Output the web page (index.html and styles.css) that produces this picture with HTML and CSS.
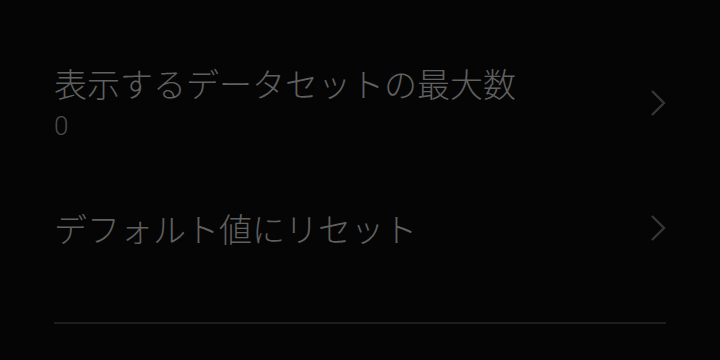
FILE: index.html
```html
<!DOCTYPE html>
<html lang="ja">
<head>
<meta charset="utf-8">
<link rel="stylesheet" href="styles.css">
</head>
<body>
<div class="list">
  <div class="row">
    <div class="text">
      <div class="title">表示するデータセットの最大数</div>
      <div class="summary">0</div>
    </div>
    <svg class="chev" width="16" height="28" viewBox="0 0 16 28"><path d="M2 2 L14 14 L2 26" fill="none" stroke="#363636" stroke-width="2.4"/></svg>
  </div>
  <div class="row">
    <div class="text">
      <div class="title">デフォルト値にリセット</div>
    </div>
    <svg class="chev" width="16" height="28" viewBox="0 0 16 28"><path d="M2 2 L14 14 L2 26" fill="none" stroke="#363636" stroke-width="2.4"/></svg>
  </div>
  <div class="divider"></div>
</div>
</body>
</html>
```
FILE: styles.css
```css
html, body {
  margin: 0;
  padding: 0;
  background: #050505;
  width: 720px;
  height: 360px;
  overflow: hidden;
}
.list {
  padding: 40px 54px 0 54px;
  font-family: "Noto Sans CJK JP", "Noto Sans", sans-serif;
}
.row {
  height: 125px;
  display: flex;
  align-items: center;
  justify-content: space-between;
}
.text {
  display: flex;
  flex-direction: column;
}
.title {
  font-size: 33px;
  font-weight: 300;
  line-height: 40px;
  color: #606060;
}
.summary {
  margin-top: 6px;
  font-size: 26px;
  line-height: 34px;
  color: #4a4a4a;
  font-family: Roboto, "Noto Sans", sans-serif;
  font-weight: 300;
}
.divider {
  margin-top: 32px;
  height: 2px;
  background: #1e1e1e;
}
```
